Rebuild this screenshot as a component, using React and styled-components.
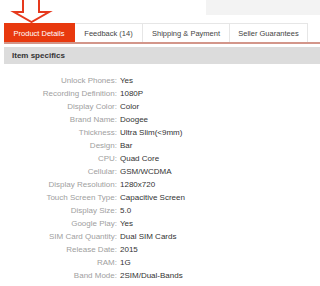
import { Fragment } from "react";
import styled, { createGlobalStyle } from "styled-components";

const Global = createGlobalStyle`
  html, body {
    margin: 0;
    padding: 0;
    background: #fff;
  }
  body {
    width: 320px;
    height: 286px;
    overflow: hidden;
    font-family: "Liberation Sans", Arial, sans-serif;
  }
`;

const Page = styled.div`
  width: 320px;
  height: 286px;
  overflow: hidden;
`;

const TopStrip = styled.div`
  height: 23px;
  display: flex;
  justify-content: space-between;
  align-items: flex-start;
`;

const ArrowBox = styled.div`
  width: 60px;
  height: 23px;
`;

const GreyBox = styled.div`
  width: 114px;
  height: 15px;
  background: #f3f3f3;
`;

const Tabs = styled.div`
  display: flex;
  margin-left: 4px;
  height: 19px;
  border-bottom: 2px solid #d3968a;
`;

const Tab = styled.div`
  width: ${(p) => p.w}px;
  box-sizing: border-box;
  display: flex;
  align-items: center;
  justify-content: center;
  font-size: 7.5px;
  color: ${(p) => (p.active ? "#fff" : "#444")};
  background: ${(p) => (p.active ? "#e8390e" : "#fff")};
  border-top: 1px solid ${(p) => (p.active ? "#e8390e" : "#e6e6e6")};
  border-right: 1px solid ${(p) => (p.active ? "#e8390e" : "#e6e6e6")};
`;

const SectionBar = styled.div`
  margin: 3px 0 0 4px;
  height: 17px;
  background: #dcdcdc;
  display: flex;
  align-items: center;
  padding-left: 8px;
  font-size: 8px;
  font-weight: bold;
  color: #333;
`;

const Specs = styled.div`
  margin-top: 10px;
  display: grid;
  grid-template-columns: 117px 1fr;
  column-gap: 3px;
  font-size: 8px;
  line-height: 13px;
`;

const Label = styled.div`
  text-align: right;
  color: #a0a0a0;
`;

const Value = styled.div`
  color: #333;
  white-space: nowrap;
`;

const specs = [
  ["Unlock Phones", "Yes"],
  ["Recording Definition", "1080P"],
  ["Display Color", "Color"],
  ["Brand Name", "Doogee"],
  ["Thickness", "Ultra Slim(<9mm)"],
  ["Design", "Bar"],
  ["CPU", "Quad Core"],
  ["Cellular", "GSM/WCDMA"],
  ["Display Resolution", "1280x720"],
  ["Touch Screen Type", "Capacitive Screen"],
  ["Display Size", "5.0"],
  ["Google Play", "Yes"],
  ["SIM Card Quantity", "Dual SIM Cards"],
  ["Release Date", "2015"],
  ["RAM", "1G"],
  ["Band Mode", "2SIM/Dual-Bands"],
  ["CPU Manufacturer", "MTK"],
];

const DownArrow = () => (
  <svg width="60" height="23" viewBox="0 0 60 23">
    <path
      d="M23 -2 L39 -2 L39 12 L49 12 L31.5 22 L14 12 L23 12 Z"
      fill="#fff"
      stroke="#e6391d"
      strokeWidth="2"
    />
  </svg>
);

export default function App() {
  return (
    <Page>
      <Global />
      <TopStrip>
        <ArrowBox>
          <DownArrow />
        </ArrowBox>
        <GreyBox />
      </TopStrip>
      <Tabs>
        <Tab active w={71}>Product Details</Tab>
        <Tab w={68}>Feedback (14)</Tab>
        <Tab w={87}>Shipping &amp; Payment</Tab>
        <Tab w={78}>Seller Guarantees</Tab>
      </Tabs>
      <SectionBar>Item specifics</SectionBar>
      <Specs>
        {specs.map(([k, v]) => (
          <Fragment key={k}>
            <Label>{k}:</Label>
            <Value>{v}</Value>
          </Fragment>
        ))}
      </Specs>
    </Page>
  );
}
